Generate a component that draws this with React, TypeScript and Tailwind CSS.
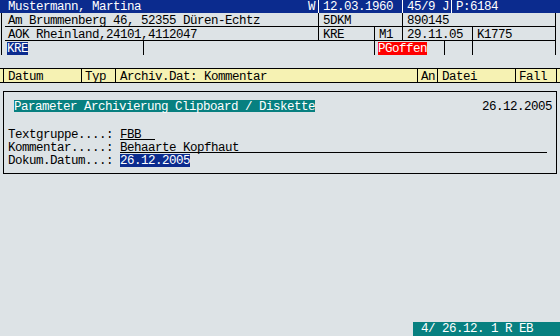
const NAVY = "bg-[#0b2b8e]";

const App = () => {
  return (
    <div className="flex h-[336px] w-[560px] flex-col overflow-hidden whitespace-pre bg-[#dde3e6] font-['Liberation_Mono',monospace] text-[12.5px] tracking-[-0.5px] text-black">
      {/* patient header */}
      <div className={`flex h-[13px] leading-[15px] text-white ${NAVY}`}>
        <div className="flex w-[318px] justify-between pl-[8px] pr-[3px]">
          <span>Mustermann, Martina</span>
          <span>W</span>
        </div>
        <div className="w-[84px] border-l border-white pl-[4px]">12.03.1960</div>
        <div className="w-[49px] border-l border-white pl-[4px]">45/9 J</div>
        <div className="flex-1 border-l border-white pl-[4px]">P:6184</div>
      </div>

      <div className="ml-[1px] w-[555px] border-x border-black">
        <div className="ml-[3px] flex h-[14px] border-b border-black leading-[16px]">
          <div className="w-[313px] pl-[3px]">Am Brummenberg 46, 52355 Düren-Echtz</div>
          <div className="w-[84px] border-l border-black pl-[4px]">5DKM</div>
          <div className="flex-1 border-l border-black pl-[4px]">890145</div>
        </div>
        <div className="ml-[3px] flex h-[14px] border-b border-black leading-[16px]">
          <div className="w-[313px] pl-[3px]">AOK Rheinland,24101,4112047</div>
          <div className="w-[56px] border-l border-black pl-[4px]">KRE</div>
          <div className="w-[28px] border-l border-black pl-[4px]">M1</div>
          <div className="w-[70px] border-l border-black pl-[4px]">29.11.05</div>
          <div className="flex-1 border-l border-black pl-[4px]">K1775</div>
        </div>
        <div className="ml-[3px] flex h-[14px] leading-[16px]">
          <div className="w-[138px] pl-[2px]">
            <span className={`inline-block h-[13px] leading-[14px] text-white ${NAVY}`}>KRE</span>
          </div>
          <div className="w-[231px] border-l border-black" />
          <div className="w-[70px] border-l border-black pl-[3px]">
            <span className="inline-block h-[13px] bg-[#ff0000] leading-[14px] text-white">PGoffen</span>
          </div>
          <div className="w-[28px] border-l border-black" />
          <div className="flex-1 border-l border-black" />
        </div>
      </div>

      {/* list header */}
      <div className="mt-[13px] flex h-[15px] border-y border-black bg-[#f6f2b3] leading-[17px]">
        <div className="w-[3px]" />
        <div className="w-[78px] border-l border-black pl-[4px]">Datum</div>
        <div className="w-[34px] border-l border-black pl-[3px]">Typ</div>
        <div className="w-[302px] border-l border-black pl-[4px]">Archiv.Dat: Kommentar</div>
        <div className="w-[20px] border-l border-black pl-[3px]">An</div>
        <div className="w-[78px] border-l border-black pl-[4px]">Datei</div>
        <div className="w-[41px] border-l border-black pl-[3px]">Fall</div>
        <div className="flex-1 border-l border-black" />
      </div>

      {/* dialog */}
      <div className="mx-[3px] mt-[8px] h-[83px] border border-black">
        <div className="mt-[8px] flex h-[12px] justify-between pr-[4px] leading-[14px]">
          <span className="ml-[10px] h-[12px] bg-[#078080] text-white">Parameter Archivierung Clipboard / Diskette</span>
          <span>26.12.2005</span>
        </div>
        <div className="mt-[16px] pl-[4px] leading-[14px]">
          <div className="h-[13px]">
            Textgruppe....:{" "}
            <span className="inline-block h-[12px] w-[35px] border-b border-black leading-[14px]">FBB</span>
          </div>
          <div className="h-[13px]">
            Kommentar.....:{" "}
            <span className="inline-block h-[12px] w-[427px] border-b border-black leading-[14px]">Behaarte Kopfhaut</span>
          </div>
          <div className="h-[13px]">
            Dokum.Datum...:{" "}
            <span className={`inline-block h-[13px] leading-[14px] text-white ${NAVY}`}>26.12.2005</span>
          </div>
        </div>
      </div>

      {/* status line */}
      <div className="mt-auto h-[14px] w-[147px] self-end bg-[#078080] pl-[8px] leading-[14px] text-white">
        4/ 26.12. 1 R EB
      </div>
    </div>
  );
};

export default App;
